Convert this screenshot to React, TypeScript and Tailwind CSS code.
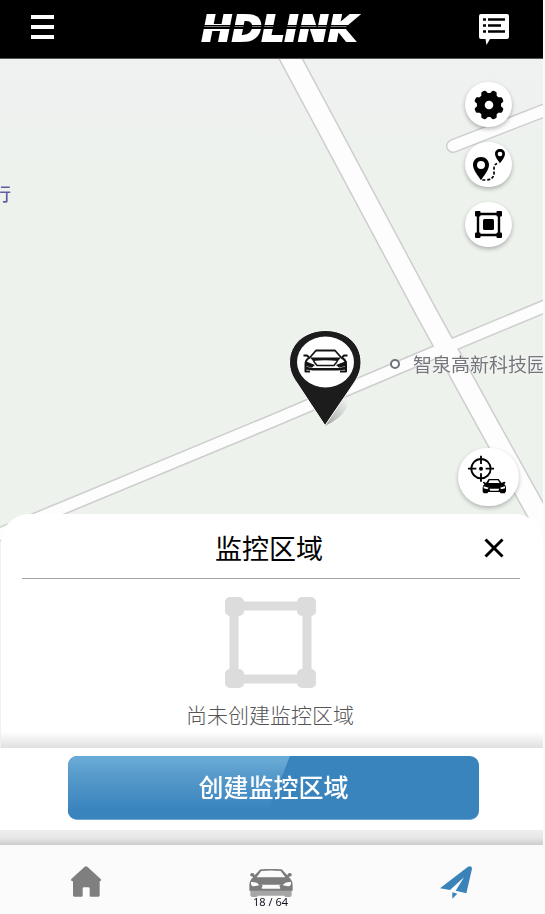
import React from "react";

const sansCjk = "font-['Noto_Sans_CJK_SC',sans-serif]";

function MenuIcon() {
  return (
    <svg width="24" height="26" viewBox="0 0 24 26" fill="#fff" aria-hidden="true">
      <rect x="0" y="1" width="23" height="4" />
      <rect x="0" y="11" width="23" height="4" />
      <rect x="0" y="21" width="23" height="4" />
    </svg>
  );
}

function MessageIcon() {
  return (
    <svg width="30" height="31" viewBox="0 0 30 31" aria-hidden="true">
      <path d="M2 0H28Q30 0 30 2V23Q30 25 28 25H11L7.500 31L6.500 25H2Q0 25 0 23V2Q0 0 2 0Z" fill="#fff" />
      <path d="M4 5.500H7M4 11.500H7M4 17.500H7M9 5.500H26M9 11.500H22M9 17.500H26" stroke="#000" strokeWidth="2.400" />
    </svg>
  );
}

function GearIcon() {
  return (
    <svg width="30" height="30" viewBox="-15 -15 30 30" aria-hidden="true">
      <circle r="8.200" fill="none" stroke="#000" strokeWidth="7.800" />
      {[22.5, 67.5, 112.5, 157.5, 202.5, 247.5, 292.5, 337.5].map((angle) => (
        <path key={angle} d="M-4 -10L-2.700 -13.600Q-2.300 -14.900 -1.200 -14.900H1.200Q2.300 -14.900 2.700 -13.600L4 -10Z" transform={`rotate(${angle})`} />
      ))}
    </svg>
  );
}

function RouteIcon() {
  return (
    <svg width="32" height="32" viewBox="0 0 96 96" aria-hidden="true">
      <path fillRule="evenodd" d="M24 24C10 24 0 34 0 48C0 62 15 80 24 94C33 80 48 62 48 48C48 34 38 24 24 24ZM24 36A12 12 0 1 1 24 60A12 12 0 1 1 24 36Z" />
      <path fillRule="evenodd" d="M81 0C72 0 66 6 66 15C66 24 75 34 81 43C87 34 96 24 96 15C96 6 90 0 81 0ZM81 8A7 7 0 1 1 81 22A7 7 0 1 1 81 8Z" />
      <path d="M28 93H38Q62 92 63 74V58Q63 44 78 42" fill="none" stroke="#000" strokeWidth="5" strokeDasharray="9 5" />
    </svg>
  );
}

function AreaIcon() {
  return (
    <svg width="27" height="27" viewBox="0 0 27 27" aria-hidden="true">
      <path d="M3 3H24V24H3Z" fill="none" stroke="#000" strokeWidth="2.400" />
      <rect x="0" y="0" width="5.500" height="5.500" rx="1" />
      <rect x="21.500" y="0" width="5.500" height="5.500" rx="1" />
      <rect x="0" y="21.500" width="5.500" height="5.500" rx="1" />
      <rect x="21.500" y="21.500" width="5.500" height="5.500" rx="1" />
      <rect x="8" y="8" width="11" height="11" rx="1.500" />
    </svg>
  );
}

function LocateCarIcon() {
  return (
    <svg width="38" height="40" viewBox="0 0 114 120" aria-hidden="true">
      <g fill="none" stroke="#000">
        <circle cx="39" cy="41" r="29" strokeWidth="5.500" />
        <path d="M39 2V27M39 55V80M0 41H25M53 41H78" strokeWidth="5.500" />
      </g>
      <circle cx="39" cy="41" r="6" />
      <path d="M47 78L57 72H95L105 78L100 86H52Z" fill="#fff" />
      <path fillRule="evenodd" d="M54 84L62 72H92L101 84L108 80L113 82L109 88Q114 92 114 98V109L110 115H98L95 111H61L58 115H48L44 111V98Q44 92 49 88L44 82L48 80ZM61 84H95L90 76H65ZM47 94V100L58 103L62 98ZM111 94V100L100 103L96 98ZM64 101L67 107H91L94 101Z" />
    </svg>
  );
}

function VehiclePin() {
  return (
    <svg width="80" height="100" viewBox="285 328 80 100" role="img" aria-label="车辆位置">
      <defs>
        <linearGradient id="pinShadow" x1="0" y1="1" x2="1" y2="0">
          <stop offset="0" stopColor="#777" stopOpacity="0.700" />
          <stop offset="1" stopColor="#999" stopOpacity="0" />
        </linearGradient>
      </defs>
      <path d="M325 426L338 398Q350 400 346 409Q340 419 325 426Z" fill="url(#pinShadow)" />
      <path d="M325 425.500L297 383C292 376 289.500 370 289.500 362C289.500 344 305 330.500 325.500 330.500C346 330.500 361 344 361 362C361 370 358.500 376 354 383Z" fill="#1b1c1b" stroke="#fff" strokeWidth="1" />
      <ellipse cx="325.500" cy="362" rx="28.500" ry="25.500" fill="#fff" />
      <g fill="none" stroke="#141414" strokeWidth="2" strokeLinejoin="round">
        <path d="M309 358.500L316 350.500H335L342 358.500" strokeWidth="1.800" />
        <path d="M303.500 355.500H307L309 357.500M342 357.500L344 355.500H347.500" />
        <path d="M309 358Q305.500 360 305.500 364V371.500H310M342 358Q346 360 346 364V371.500H340" />
        <path d="M313.500 361L317 365.500H334L337.500 361" strokeWidth="1.500" />
      </g>
      <path d="M310 357.500H341L338 361Q325 359.500 313 361Z" fill="#141414" />
      <path d="M305 361L315 365L312 367.500L305 366ZM346.500 361L336 365L339 367.500L346.500 366Z" fill="#141414" />
      <path d="M305 366.500L313 368H338L346.500 366.500V369.500L338 370.500H313L305 369.500Z" fill="#141414" />
    </svg>
  );
}

function MapBackground() {
  const roads = [
    { d: "M285 48L425 310L491 430L560 554", width: 20 },
    { d: "M-20 542L0 534L82 500L270 422L440 350L543 307L900 158", width: 12 },
    { d: "M453 146L543 111L900 -28", width: 12 },
  ];
  return (
    <svg className="absolute inset-x-0 top-0 h-full w-full" viewBox="0 59 543 689" preserveAspectRatio="xMidYMin slice" aria-hidden="true">
      <defs>
        <linearGradient id="land" x1="0" y1="0" x2="0" y2="1">
          <stop offset="0" stopColor="#f0f1f1" />
          <stop offset="0.120" stopColor="#edf2ed" />
          <stop offset="1" stopColor="#edf2ed" />
        </linearGradient>
      </defs>
      <rect x="-400" y="59" width="1400" height="900" fill="url(#land)" />
      <g fill="none" strokeLinecap="round" strokeLinejoin="round">
        {roads.map((road) => (
          <path key={road.d} d={road.d} stroke="#cdcecd" strokeWidth={road.width + 2} />
        ))}
        {roads.map((road) => (
          <path key={road.d} d={road.d} stroke="#fdfdfd" strokeWidth={road.width - 1} />
        ))}
      </g>
    </svg>
  );
}

function EmptyAreaIcon() {
  return (
    <svg width="91" height="91" viewBox="0 0 91 91" fill="#dcdcdc" aria-hidden="true">
      <path d="M9 9H82V82H9Z" fill="none" stroke="#dcdcdc" strokeWidth="9" />
      <rect x="0" y="0" width="19" height="19" rx="5" />
      <rect x="72" y="0" width="19" height="19" rx="5" />
      <rect x="0" y="72" width="19" height="19" rx="5" />
      <rect x="72" y="72" width="19" height="19" rx="5" />
    </svg>
  );
}

function HomeIcon() {
  return (
    <svg width="30" height="31" viewBox="0 0 90 93" fill="#7f7f7f" aria-hidden="true">
      <path d="M41 2Q45 -1 49 2L89 39Q92 45 86 46V88Q86 92 82 92H59Q56 92 56 89V68Q56 64 52 64H39Q35 64 35 68V89Q35 92 32 92H10Q6 92 6 88V46Q-2 45 1 39Z" />
    </svg>
  );
}

function CarIcon() {
  return (
    <svg width="44" height="28" viewBox="0 0 132 84" aria-hidden="true">
      <path d="M4 60H128V78Q128 84 122 84H112Q106 84 106 80H26Q26 84 20 84H10Q4 84 4 78Z" fill="#a6a6a6" />
      <path fillRule="evenodd" d="M36 1Q66 -2 96 1Q100 2 103 6L115 19Q116 11 124 12Q131 15 127 21L119 24Q131 34 131 49V65H1V49Q1 34 13 24L5 21Q1 15 8 12Q16 11 17 19L29 6Q32 2 36 1ZM37 6L23 25H109L95 6Q66 3 37 6ZM6 39V45Q7 52 16 52L31 49Q25 38 6 39ZM126 39V45Q125 52 116 52L101 49Q107 38 126 39ZM35 47Q42 48 41 52Q36 57 40 59H92Q96 57 91 52Q90 48 97 47Z" fill="#7c7c7c" />
    </svg>
  );
}

function PlaneIcon() {
  return (
    <svg width="32" height="33" viewBox="0 0 96 99" fill="#3983b9" aria-hidden="true">
      <path d="M0 67L84 2Q96 -2 96 8L79 82L47 74L72 34L30 72Z" />
      <path d="M37 79L52 83L37 98Z" />
    </svg>
  );
}

const toolButton =
  "flex h-[45px] w-[47px] items-center justify-center rounded-full bg-white shadow-[0_2px_4px_rgba(0,0,0,0.28)]";

export default function App() {
  return (
    <div className={`flex min-h-screen flex-col bg-[#f8fcff] pr-0.5 ${sansCjk}`}>
      <header className="flex h-[59px] shrink-0 items-center justify-between border-b border-[#555] bg-black pr-[34px] pb-1 pl-[31px]">
        <button type="button" aria-label="菜单" className="flex">
          <MenuIcon />
        </button>
        <h1 className="relative pt-1 pl-6 font-['DejaVu_Sans',sans-serif] text-[36px] leading-9 font-bold text-white italic [-webkit-text-stroke:2px_white]">
          HDLINK
          <span className="absolute -inset-x-2 top-[18px] h-1 border-t border-b-2 border-black bg-[#777] mix-blend-multiply" />
        </h1>
        <button type="button" aria-label="消息" className="flex pt-1">
          <MessageIcon />
        </button>
      </header>

      <main className="relative flex flex-1 flex-col overflow-hidden">
        <MapBackground />
        <span className="absolute top-[120px] -left-[7px] text-[18px] leading-7 font-medium text-[#625da0]">行</span>
        <span className="absolute top-[300px] left-[390px] h-[10px] w-[10px] rounded-full border-2 border-[#71717a] bg-white" />
        <span className="absolute top-[291px] left-[413px] text-[19px] leading-7 whitespace-nowrap text-[#75757b] [text-shadow:0_0_2px_white]">
          智泉高新科技园
        </span>
        <div className="absolute top-[269px] left-[285px]">
          <VehiclePin />
        </div>

        <div className="relative flex min-h-[455px] flex-1 flex-col items-end justify-between pt-[23px] pr-6 pb-2">
          <div className="flex flex-col gap-[15px] pr-[7px]">
            <button type="button" aria-label="设置" className={toolButton}>
              <GearIcon />
            </button>
            <button type="button" aria-label="轨迹" className={toolButton}>
              <RouteIcon />
            </button>
            <button type="button" aria-label="区域" className={toolButton}>
              <AreaIcon />
            </button>
          </div>
          <button type="button" aria-label="定位车辆" className="flex h-[58px] w-[61px] items-center justify-center rounded-full bg-white pr-1 pb-1 shadow-[0_2px_4px_rgba(0,0,0,0.25)]">
            <LocateCarIcon />
          </button>
        </div>

        <section className="relative ml-px rounded-t-[28px] bg-white">
          <div className="mr-[23px] ml-[21px] grid h-[65px] grid-cols-[1fr_auto_1fr] items-center border-b border-[#a5a5a5] pt-1">
            <h2 className="col-start-2 pr-1 text-[27px] leading-9 text-black">监控区域</h2>
            <button type="button" aria-label="关闭" className="mr-4 justify-self-end">
              <svg width="20" height="20" viewBox="0 0 20 20" aria-hidden="true">
                <path d="M1.500 1.500L18.500 18.500M18.500 1.500L1.500 18.500" stroke="#000" strokeWidth="3" />
              </svg>
            </button>
          </div>
          <div className="flex flex-col items-center pt-[18px] pr-1">
            <EmptyAreaIcon />
            <p className="pt-[10px] pb-0.5 text-[21px] leading-8 font-light text-[#555]">尚未创建监控区域</p>
          </div>
          <div className="h-4 bg-linear-to-b from-white to-[#e0e0e0]" />
        </section>
      </main>

      <div className="flex bg-white pt-2 pr-16 pb-2.5 pl-[68px]">
        <button type="button" className="relative h-16 flex-1 overflow-hidden rounded-[9px] border-b border-[#71a6d5] pb-1 text-[25px] leading-9 font-medium text-white bg-[#3a84be]">
          <span className="absolute inset-0 bg-linear-to-b from-[#69aad6] from-5% via-[#579bcb] via-30% to-[#3a84be] to-85% [clip-path:polygon(0_0,54%_0,48%_100%,0_100%)]" />
          <span className="relative">创建监控区域</span>
        </button>
      </div>
      <div className="h-[15px] bg-linear-to-b from-[#eeeeee] via-[#e8e8e8] to-[#cccccc]" />
      <footer className="flex h-[69px] items-start justify-between bg-[#fbfbfb] px-[71px] pt-[21px]">
        <a href="#home" aria-label="首页">
          <HomeIcon />
        </a>
        <a href="#car" aria-label="车辆" className="flex flex-col items-center pt-[3px]">
          <CarIcon />
          <span className="-mt-px font-['Noto_Sans',sans-serif] text-[11px] leading-3 text-[#101020]">18 / 64</span>
        </a>
        <a href="#track" aria-label="追踪">
          <PlaneIcon />
        </a>
      </footer>
    </div>
  );
}
